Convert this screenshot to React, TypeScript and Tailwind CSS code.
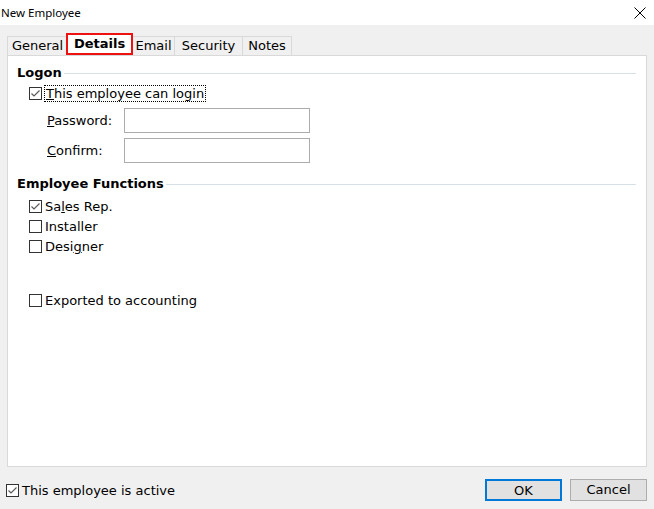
import type { ReactNode } from "react";

const font = { fontFamily: '"DejaVu Sans", Verdana, sans-serif' };

function CheckBox({ checked }: { checked?: boolean }) {
  return (
    <svg width="13" height="13" viewBox="0 0 13 13" className="shrink-0">
      <rect x="0.5" y="0.5" width="12" height="12" fill="#fff" stroke="#333" />
      {checked ? (
        <path d="M2.5 6.5 L5 9 L10.5 3.5" fill="none" stroke="#5a5a5a" strokeWidth="1.2" />
      ) : null}
    </svg>
  );
}

function CheckRow({
  checked,
  children,
  focused,
}: {
  checked?: boolean;
  children: ReactNode;
  focused?: boolean;
}) {
  return (
    <label className="flex h-5 items-center gap-[3px] text-[13px] text-black">
      <CheckBox checked={checked} />
      <span
        className={
          focused
            ? "px-px leading-[15px] outline-1 outline-dotted outline-black"
            : "leading-[15px]"
        }
      >
        {children}
      </span>
    </label>
  );
}

function GroupHeading({ title }: { title: string }) {
  return (
    <div className="mr-[10px] ml-[9px] flex h-5 items-center gap-[2px]">
      <span className="text-[13px] font-bold text-black">{title}</span>
      <div className="h-px flex-1 bg-[#d7e0e6]" />
    </div>
  );
}

function Field({ label, mnemonic }: { label: string; mnemonic: string }) {
  return (
    <div className="ml-[39px] flex h-[25px] items-center">
      <span className="w-[77px] text-[13px] text-black">
        <u>{mnemonic}</u>
        {label}
      </span>
      <input className="h-[25px] w-[186px] border border-[#acacac] bg-white outline-none" />
    </div>
  );
}

const tabClass =
  "flex h-[19px] items-center justify-center border border-b-0 border-[#d9d9d9] bg-[#f0f0f0] text-[13px] text-black";

export default function App() {
  return (
    <div className="flex h-[509px] w-[654px] flex-col bg-[#f0f0f0]" style={font}>
      <div className="flex h-[25px] shrink-0 items-center justify-between bg-white pr-[8px] pl-[1px]">
        <span
          className="text-[11.5px] text-black"
          style={{ fontFamily: '"Noto Sans", "Liberation Sans", sans-serif' }}
        >
          New Employee
        </span>
        <svg width="12" height="12" viewBox="0 0 12 12">
          <path d="M0.5 0.5 L11.5 11.5 M11.5 0.5 L0.5 11.5" stroke="#000" strokeWidth="1" />
        </svg>
      </div>

      <div className="mt-[9px] flex h-[21px] items-end pl-[7px]">
        <div className={`${tabClass} w-[61px]`}>General</div>
        <div className="relative -ml-[2px] flex h-[22px] w-[67px] items-center justify-center border-2 border-[#ee1111] bg-white text-[13px] font-bold text-black">
          Details
        </div>
        <div className={`${tabClass} w-[42px] border-l-0`}>Email</div>
        <div className={`${tabClass} -ml-px w-[69px]`}>Security</div>
        <div className={`${tabClass} -ml-px w-[50px]`}>Notes</div>
      </div>

      <div className="mx-[7px] flex h-[412px] flex-col border border-[#d9d9d9] bg-white pt-[7px]">
        <GroupHeading title="Logon" />
        <div className="ml-[21px]">
          <CheckRow checked focused>
            <u>T</u>his employee can login
          </CheckRow>
        </div>
        <div className="mt-[5px]">
          <Field mnemonic="P" label="assword:" />
        </div>
        <div className="mt-[5px]">
          <Field mnemonic="C" label="onfirm:" />
        </div>

        <div className="mt-[11px]">
          <GroupHeading title="Employee Functions" />
        </div>
        <div className="mt-[2px] ml-[21px] flex flex-col">
          <CheckRow checked>
            Sa<u>l</u>es Rep.
          </CheckRow>
          <CheckRow>Installer</CheckRow>
          <CheckRow>
            Desi<u>g</u>ner
          </CheckRow>
        </div>
        <div className="mt-[34px] ml-[21px]">
          <CheckRow>Exported to accounting</CheckRow>
        </div>
      </div>

      <div className="flex flex-1 items-start justify-between pt-[12px] pr-[7px] pl-[6px]">
        <div className="mt-px">
          <CheckRow checked>This employee is active</CheckRow>
        </div>
        <div className="flex gap-[8px]">
          <button className="h-[22px] w-[77px] border-2 border-[#0078d7] bg-[#e1e1e1] text-[13px] text-black">
            OK
          </button>
          <button className="h-[22px] w-[77px] border border-[#adadad] bg-[#e1e1e1] text-[13px] text-black">
            Cancel
          </button>
        </div>
      </div>
    </div>
  );
}
